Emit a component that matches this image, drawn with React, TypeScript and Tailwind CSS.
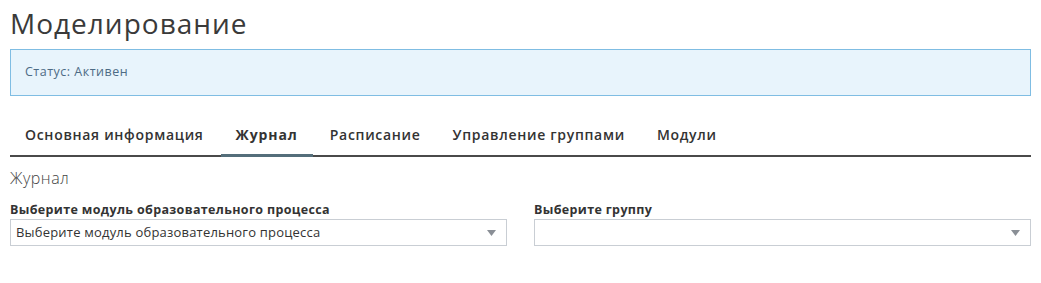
const tabs = ['Основная информация', 'Журнал', 'Расписание', 'Управление группами', 'Модули'];

function Select({ label, value }: { label: string; value?: string }) {
  return (
    <div className="flex flex-col">
      <label className="text-[12.5px] font-bold text-[#333] leading-[16px] mb-[1px] tracking-[0.35px]">{label}</label>
      <div className="h-[27px] border border-[#c9ced4] flex items-center justify-between pl-[5px] pr-[10px] bg-white">
        <span className="text-[13px] text-[#333] truncate tracking-[0.2px]">{value}</span>
        <svg width="9" height="6" viewBox="0 0 9 6" className="shrink-0">
          <path d="M0 0 H9 L4.5 6 Z" fill="#8a8f96" />
        </svg>
      </div>
    </div>
  );
}

export default function App() {
  const active = 'Журнал';
  return (
    <div className="w-[1041px] h-[283px] bg-white px-[10px] pt-[4px]" style={{ fontFamily: '"Open Sans", sans-serif' }}>
      <h1 className="text-[28px] leading-[38px] font-normal text-[#3a3a3a] tracking-[1px]">Моделирование</h1>
      <div className="mt-[7px] h-[47px] border border-[#7fbde3] bg-[#e8f4fc] flex items-center px-[14px]">
        <span className="text-[12.5px] text-[#4d6b85] tracking-[0.5px]">Статус: Активен</span>
      </div>
      <div className="mt-[18px] flex gap-[2px] border-b-2 border-[#4a4a4a]">
        {tabs.map(t => (
          <div
            key={t}
            className={
              'px-[15px] h-[43px] flex items-center text-[14px] text-[#333] -mb-[2px] border-b-[3px] ' +
              (t === active
                ? 'border-[#546e7a] font-bold tracking-[0.9px]'
                : 'border-transparent font-semibold tracking-[0.7px]')
            }
          >
            {t}
          </div>
        ))}
      </div>
      <h2 className="mt-[10px] text-[16px] font-light text-[#444] leading-[22px] tracking-[0.5px]">Журнал</h2>
      <div className="mt-[13px] grid grid-cols-2 gap-x-[27px]">
        <Select label="Выберите модуль образовательного процесса" value="Выберите модуль образовательного процесса" />
        <Select label="Выберите группу" />
      </div>
    </div>
  );
}
